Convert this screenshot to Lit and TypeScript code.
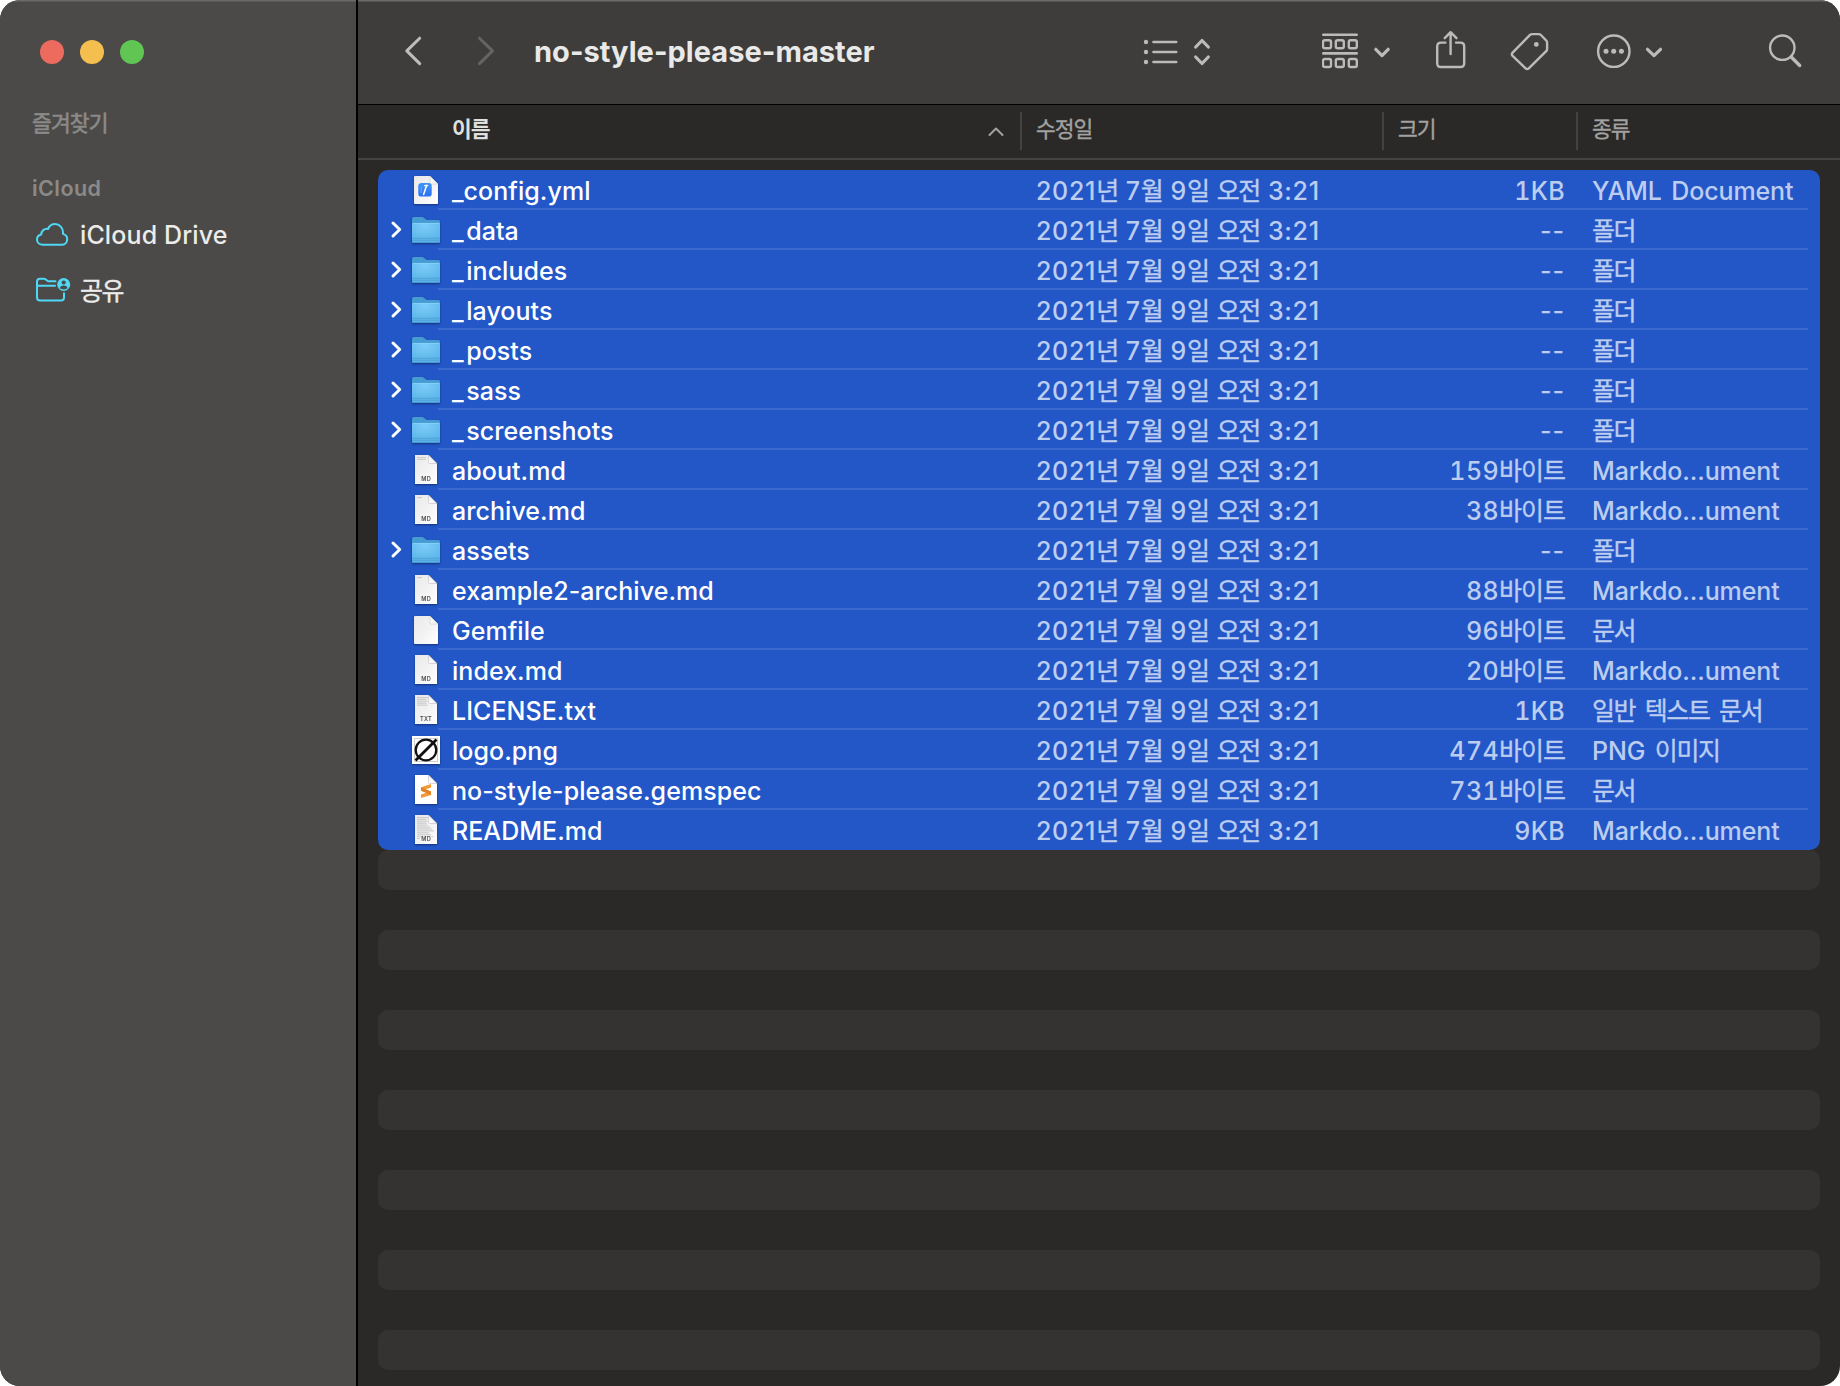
import { LitElement, html, svg, css, TemplateResult } from "lit";
import { customElement, property } from "lit/decorators.js";

type Kind = "config" | "folder" | "md" | "doc" | "txt" | "image" | "sublime";

interface Entry {
  name: string;
  icon: Kind;
  size: string;
  kind: string;
  preview?: number;
}

const MODIFIED = "2021년 7월 9일 오전 3:21";

const ENTRIES: Entry[] = [
  { name: "_config.yml", icon: "config", size: "1KB", kind: "YAML Document" },
  { name: "_data", icon: "folder", size: "--", kind: "폴더" },
  { name: "_includes", icon: "folder", size: "--", kind: "폴더" },
  { name: "_layouts", icon: "folder", size: "--", kind: "폴더" },
  { name: "_posts", icon: "folder", size: "--", kind: "폴더" },
  { name: "_sass", icon: "folder", size: "--", kind: "폴더" },
  { name: "_screenshots", icon: "folder", size: "--", kind: "폴더" },
  { name: "about.md", icon: "md", size: "159바이트", kind: "Markdo...ument", preview: 2 },
  { name: "archive.md", icon: "md", size: "38바이트", kind: "Markdo...ument", preview: 1 },
  { name: "assets", icon: "folder", size: "--", kind: "폴더" },
  { name: "example2-archive.md", icon: "md", size: "88바이트", kind: "Markdo...ument", preview: 1 },
  { name: "Gemfile", icon: "doc", size: "96바이트", kind: "문서" },
  { name: "index.md", icon: "md", size: "20바이트", kind: "Markdo...ument" },
  { name: "LICENSE.txt", icon: "txt", size: "1KB", kind: "일반 텍스트 문서", preview: 5 },
  { name: "logo.png", icon: "image", size: "474바이트", kind: "PNG 이미지" },
  { name: "no-style-please.gemspec", icon: "sublime", size: "731바이트", kind: "문서" },
  { name: "README.md", icon: "md", size: "9KB", kind: "Markdo...ument", preview: 12 },
];

/** Splits mixed text so that Hangul runs can carry their own tracking. */
function mixed(text: string): TemplateResult[] {
  return text
    .split(/([\uac00-\ud7a3]+)/)
    .filter(Boolean)
    .map((part) =>
      /[\uac00-\ud7a3]/.test(part)
        ? html`<span class="ko">${part}</span>`
        : html`<span>${part}</span>`
    );
}

@customElement("file-icon")
export class FileIcon extends LitElement {
  @property() kind: Kind = "doc";
  @property({ type: Number }) preview = 0;

  static styles = css`
    :host {
      display: block;
      width: 28px;
      height: 40px;
    }
    svg {
      display: block;
      filter: drop-shadow(0 1px 0.8px rgba(0, 0, 30, 0.45));
    }
    .ext {
      font: 600 5.6px Inter, "Liberation Sans", sans-serif;
      fill: #4a4a4a;
      letter-spacing: 0.25px;
    }
  `;

  private defs() {
    return svg`<defs>
      <linearGradient id="page" x1="0" y1="0" x2="1" y2="1">
        <stop offset="0" stop-color="#e9e9e9" /><stop offset="0.5" stop-color="#f2f2f2" /><stop offset="1" stop-color="#ffffff" />
      </linearGradient>
      <linearGradient id="fold" x1="0" y1="1" x2="1" y2="0">
        <stop offset="0" stop-color="#ffffff" /><stop offset="0.5" stop-color="#f4f4f4" /><stop offset="1" stop-color="#c4c4c4" />
      </linearGradient>
      <radialGradient id="front" cx="0.45" cy="0.1" r="0.95">
        <stop offset="0" stop-color="#7ccefa" /><stop offset="1" stop-color="#57b1e3" />
      </radialGradient>
      <linearGradient id="tool" x1="0" y1="0" x2="0" y2="1">
        <stop offset="0" stop-color="#3f93fb" /><stop offset="1" stop-color="#2a70f0" />
      </linearGradient>
    </defs>`;
  }

  private widePage() {
    return svg`
      <path d="M3 6h15l8 8v19a1 1 0 0 1-1 1H3a1 1 0 0 1-1-1V7a1 1 0 0 1 1-1z" fill="url(#page)" />
      <path d="M18 6l8 8h-7a1 1 0 0 1-1-1z" fill="url(#fold)" stroke="#bdbdbd" stroke-width="0.5" />`;
  }

  private narrowPage(fill = "url(#page)") {
    return svg`
      <path d="M3 5h13.5L25 13.5V34H3z" fill=${fill} />
      <path d="M16.5 5L25 13.5h-7.5a1 1 0 0 1-1-1z" fill="url(#fold)" stroke="#b5b5b5" stroke-width="0.5" />`;
  }

  private lines() {
    const n = this.preview;
    return Array.from({ length: n }, (_, i) => {
      const width = i < 5 ? 10.5 - ((i * 3) % 2) : 17 - ((i * 5) % 7);
      const short = n < 3 ? (n === 2 ? 9 : 5) : width;
      return svg`<rect x="5" y=${7 + i * 1.9} width=${short} height="1.1" fill="#cbcbcb" />`;
    });
  }

  private art() {
    switch (this.kind) {
      case "folder":
        return svg`
          <path d="M0 9a2 2 0 0 1 2-2h7.5c1.2 0 1.8.4 2.6 1.1l1.6 1.2c.5.4 1 .6 1.7.6H26.5a1.5 1.5 0 0 1 1.5 1.5V20H0z" fill="#459bd2" />
          <path d="M0 14.2a1.2 1.2 0 0 1 1.2-1.2H26.8a1.2 1.2 0 0 1 1.2 1.2V31.5a1.5 1.5 0 0 1-1.5 1.5H1.5A1.5 1.5 0 0 1 0 31.5z" fill="url(#front)" />
          <path d="M0.5 13.4H27.5" stroke="#8ad3f8" stroke-width="0.8" />
          <path d="M0 28.3H28M0 30.3H28" stroke="#4a9fd4" stroke-width="0.8" />
          <path d="M1 32.6H27" stroke="#3f94cc" stroke-width="0.8" />`;
      case "config":
        return svg`${this.widePage()}
          <rect x="6.3" y="13" width="13.4" height="13.6" rx="3.2" fill="url(#tool)" />
          <path d="M14.4 16L11.6 24.4" stroke="#fff" stroke-width="1.5" stroke-linecap="round" />
          <path d="M12 15.7l2.9-.5 1.3.9" fill="none" stroke="#fff" stroke-width="1.1" />
          <path d="M9.4 16.5L9 23" stroke="#6fb0fd" stroke-width="0.9" />`;
      case "doc":
        return this.widePage();
      case "md":
      case "txt":
        return svg`${this.narrowPage()}${this.lines()}
          ${this.preview > 6 ? svg`<rect x="8" y="26.5" width="12" height="5.5" fill="#f6f6f6" />` : null}
          <text class="ext" x="14.1" y="31" text-anchor="middle">${this.kind.toUpperCase()}</text>`;
      case "image":
        return svg`
          <rect x="0" y="6" width="28" height="28" fill="#fff" />
          <rect x="2.5" y="8.5" width="23" height="23" fill="#fff" stroke="#cfcfcf" />
          <circle cx="14" cy="20" r="10.3" fill="none" stroke="#111" stroke-width="2.3" />
          <path d="M3.5 30.5L24.5 9.5" stroke="#111" stroke-width="2.8" />`;
      case "sublime":
        return svg`${this.narrowPage("#ffffff")}
          <path d="M9 17.2L19 14v3.6l-6 1.9 6 1.9v3.6L9 28.1v-3.6l6-1.9-6-1.9z" fill="#f29a36" />
          <path d="M9 17.2v3.5l10 4.3v-3.6z" fill="#df8326" />`;
    }
  }

  render() {
    return html`<svg width="28" height="40" viewBox="0 0 28 40">${this.defs()}${this.art()}</svg>`;
  }
}

@customElement("app-root")
export class AppRoot extends LitElement {
  static styles = css`
    :host {
      display: block;
      width: 1840px;
      height: 1386px;
      background: #fff;
      font-family: Inter, "Noto Sans CJK KR", sans-serif;
      font-size: 25px;
      color: #fff;
    }
    .window {
      display: flex;
      box-sizing: border-box;
      height: 1386px;
      border-radius: 20px;
      overflow: hidden;
      background: #2a2927;
    }
    svg {
      display: block;
      flex: none;
      fill: none;
      stroke-linecap: round;
      stroke-linejoin: round;
    }
    .ko {
      letter-spacing: -1.55px;
      font-weight: 400;
      -webkit-text-stroke: 0.35px currentColor;
    }

    .sidebar {
      box-sizing: border-box;
      width: 358px;
      flex: none;
      background: linear-gradient(#6b6a68 0 1px, #5a5957 1px 2px, #4b4a48 2px);
      border-right: 2px solid #000;
    }
    .lights {
      display: flex;
      gap: 16px;
      padding: 40px 0 0 40px;
    }
    .light {
      width: 24px;
      height: 24px;
      border-radius: 50%;
    }
    .red { background: #ed6a5e; }
    .amber { background: #f5bf4f; }
    .green { background: #61c554; }
    .section {
      padding-left: 32px;
      font-size: 21.5px;
      font-weight: 600;
      line-height: 32px;
      color: #8b8a88;
    }
    .favorites {
      margin-top: 43px;
      font-weight: 500;
    }
    .favorites .ko {
      letter-spacing: -0.9px;
      -webkit-text-stroke-width: 0.6px;
    }
    .cloud-title {
      margin-top: 33px;
      letter-spacing: 0.45px;
    }
    .place {
      display: flex;
      align-items: center;
      gap: 9px;
      height: 40px;
      padding-left: 34px;
      color: #ececeb;
      font-weight: 500;
    }
    .place svg { stroke: #4fd8f5; stroke-width: 2; }
    .drive { margin-top: 11px; letter-spacing: 0.12px; }
    .shared { margin-top: 14px; }

    .main {
      display: flex;
      flex-direction: column;
      flex: 1;
      min-width: 0;
    }
    .toolbar {
      display: flex;
      align-items: center;
      height: 104px;
      flex: none;
      border-bottom: 1px solid #000;
      background: linear-gradient(#6b6a68 0 1px, #555452 1px 2px, #3e3d3b 2px);
    }
    .toolbar svg { stroke: #bcbbba; stroke-width: 2.4; }
    .toolbar svg.back { margin-left: 44px; stroke: #bebdbc; stroke-width: 3; }
    .toolbar svg.forward { margin-left: 48px; stroke: #656462; stroke-width: 3; }
    .title {
      width: 609px;
      margin: 0 0 1px 36px;
      font-size: 29px;
      font-weight: 700;
      line-height: 48px;
      letter-spacing: 0.04px;
      color: #e9e9e8;
    }
    .group { margin-left: 104px; }
    .share { margin-left: 40px; }
    .tag { margin-left: 40px; }
    .more { margin-left: 44px; }
    .search { margin-left: 112px; }

    .columns {
      display: grid;
      grid-template-columns: 662px 362px 194px 1fr;
      box-sizing: border-box;
      height: 55px;
      flex: none;
      padding-top: 7px;
      border-bottom: 2px solid #454442;
      font-size: 21.5px;
      line-height: 35px;
      color: #a3a2a1;
    }
    .columns .ko { letter-spacing: -1px; }
    .column {
      height: 38px;
      padding-left: 14px;
      border-left: 2px solid #434240;
    }
    .column.first {
      display: flex;
      justify-content: space-between;
      padding: 0 16px 0 94px;
      border-left: 0;
      color: #dfdfde;
    }
    .column.first .ko { font-weight: 700; -webkit-text-stroke-width: 0; }
    .caret { stroke: #a3a2a1; stroke-width: 2; }

    .list {
      padding: 10px 20px 0;
    }
    .selection {
      border-radius: 10px;
      background: #2357c8;
      overflow: hidden;
    }
    .row {
      display: grid;
      grid-template-columns: 34px 40px 584px 409px 120px 1fr;
      height: 40px;
      line-height: 42px;
      white-space: nowrap;
      background: linear-gradient(#3c6acf, #3c6acf) no-repeat 60px 38px / 1370px 2px;
      color: #bccdf0;
      font-weight: 450;
    }
    .row:last-child { background: none; }
    .disclosure { stroke: #fff; stroke-width: 3; }
    .name {
      color: #fff;
      font-weight: 500;
      letter-spacing: 0.05px;
    }
    .lead { letter-spacing: 2.6px; }
    .date {
      letter-spacing: 0.7px;
      word-spacing: 0.9px;
    }
    .size {
      text-align: right;
      font-variant-numeric: tabular-nums;
      letter-spacing: 0.35px;
    }
    .size .ko { letter-spacing: -1px; }
    .size.none {
      font-variant-numeric: normal;
      letter-spacing: 1px;
    }
    .kind {
      padding-left: 27px;
      letter-spacing: -0.12px;
      word-spacing: 3px;
    }
    .kind .ko { letter-spacing: -1.4px; }
    .stripe {
      height: 40px;
      margin-bottom: 40px;
      border-radius: 10px;
      background: #343331;
    }
  `;

  private row(e: Entry) {
    const folder = e.icon === "folder";
    return html`<div class="row">
      ${folder
        ? html`<svg class="disclosure" width="34" height="40" viewBox="0 0 34 40"><path d="M15 13l6.700 6.500L15 26" /></svg>`
        : html`<span></span>`}
      <file-icon .kind=${e.icon} .preview=${e.preview ?? 0}></file-icon>
      <span class="name">${folder && e.name.startsWith("_")
        ? html`<span class="lead">_</span>${e.name.slice(1)}`
        : e.name}</span>
      <span class="date">${mixed(MODIFIED)}</span>
      <span class=${folder ? "size none" : "size"}>${mixed(e.size)}</span>
      <span class="kind">${mixed(e.kind)}</span>
    </div>`;
  }

  private sidebar() {
    return html`<aside class="sidebar">
      <div class="lights">
        <span class="light red"></span><span class="light amber"></span><span class="light green"></span>
      </div>
      <div class="section favorites">${mixed("즐겨찾기")}</div>
      <div class="section cloud-title">iCloud</div>
      <div class="place drive">
        <svg width="37" height="40" viewBox="0 0 37 40">
          <path d="M9 29.800C5.500 29.800 3 27.500 3 24.500c0-2.700 1.800-4.600 4.300-5.100C7.300 16 10.500 13.200 14 14 15.300 11 17.800 9.100 21 9.100c4.800 0 8 3.700 8 8.600v1.200c2.800.8 4.200 2.900 4.200 5.400 0 3.100-2.500 5.500-5.700 5.500z" />
        </svg>
        <span>iCloud Drive</span>
      </div>
      <div class="place shared">
        <svg width="37" height="40" viewBox="0 0 37 40">
          <path d="M21.500 12.200H14L11.500 10.300C10.900 9.900 10.500 9.700 9.800 9.700H6C4 9.700 3 10.700 3 12.700V28.500C3 30.500 4 31.500 6 31.500H27C29 31.500 30 30.500 30 28.500V24.300M3 16.800H21" />
          <circle cx="29.700" cy="15.500" r="6.500" fill="#4fd8f5" stroke="none" />
          <circle cx="29.700" cy="13.500" r="2.100" fill="#4b4a48" stroke="none" />
          <path d="M25.800 19.300c.6-2 2-2.700 3.900-2.700s3.300.7 3.900 2.700c-2.100 1.500-5.700 1.500-7.800 0z" fill="#4b4a48" stroke="none" />
        </svg>
        <span>${mixed("공유")}</span>
      </div>
    </aside>`;
  }

  private toolbar() {
    const cell = (x: number, y: number) => svg`<rect x=${x} y=${y} width="8" height="8" rx="1.800" />`;
    return html`<header class="toolbar">
      <svg class="back" width="24" height="48" viewBox="402 28 24 48"><path d="M419.700 38.200L406.800 50.900l12.900 12.700" /></svg>
      <svg class="forward" width="24" height="48" viewBox="474 28 24 48"><path d="M479.500 38.200L492.500 50.900l-13 12.700" /></svg>
      <h1 class="title">no-style-please-master</h1>
      <svg class="view" width="75" height="48" viewBox="1143 28 75 48">
        <g fill="#bcbbba" stroke="none"><circle cx="1146" cy="42" r="2.200" /><circle cx="1146" cy="52" r="2.200" /><circle cx="1146" cy="62" r="2.200" /></g>
        <path d="M1153.500 42h22.700M1153.500 52h22.700M1153.500 62h22.700" stroke-width="2.600" />
        <path d="M1195.700 47l6.300-6.500 6.300 6.500M1195.700 57l6.300 6.500 6.300-6.500" stroke-width="3.200" />
      </svg>
      <svg class="group" width="74" height="48" viewBox="1322 28 74 48">
        <path d="M1323.300 34.700h33.400M1323.300 53.400h33.400" stroke-width="2.600" />
        ${[1323, 1335.8, 1348.8].map((x) => svg`${cell(x, 40.2)}${cell(x, 59)}`)}
        <path d="M1375.800 49.300l6.200 6.300 6.200-6.300" stroke-width="3.200" />
      </svg>
      <svg class="share" width="31" height="48" viewBox="1436 28 31 48">
        <path d="M1445.400 42.600h-4.400q-3.800 0-3.800 3.800v16.800q0 3.800 3.800 3.800h19.400q3.800 0 3.800-3.800v-16.800q0-3.800-3.800-3.800h-4.400" />
        <path d="M1450.600 54V32.500M1444.700 38.200l5.900-6 5.900 6" />
      </svg>
      <svg class="tag" width="42" height="48" viewBox="1507 28 42 48">
        <path d="M1530 34.900q.9-.8 2.200-.8h6.500q1.300 0 2.200.9l5.200 5.300q1 .9 1 2.200v6.500q0 1.300-.9 2.200l-17.400 17.100q-1.600 1.500-3.200 0l-13-12.400q-1.500-1.600 0-3.300z" />
        <circle cx="1536.300" cy="44.400" r="2.400" fill="#bcbbba" stroke="none" />
      </svg>
      <svg class="more" width="72" height="48" viewBox="1593 28 72 48">
        <circle cx="1613.800" cy="51.200" r="15.700" />
        <g fill="#bcbbba" stroke="none"><circle cx="1606" cy="51.300" r="2.500" /><circle cx="1613.700" cy="51.300" r="2.500" /><circle cx="1621.400" cy="51.300" r="2.500" /></g>
        <path d="M1647.500 49.300l6.500 6.300 6.500-6.300" stroke-width="3.200" />
      </svg>
      <svg class="search" width="32" height="48" viewBox="1777 28 32 48" overflow="visible">
        <circle cx="1782.300" cy="47.700" r="12.200" /><path d="M1791.500 57.300l8.200 8.200" stroke-width="3.400" />
      </svg>
    </header>`;
  }

  render() {
    return html`<div class="window">
      ${this.sidebar()}
      <main class="main">
        ${this.toolbar()}
        <div class="columns">
          <div class="column first">
            <span>${mixed("이름")}</span>
            <svg class="caret" width="16" height="38" viewBox="0 0 16 38"><path d="M1.500 23L8 16.500l6.500 6.500" /></svg>
          </div>
          <div class="column">${mixed("수정일")}</div>
          <div class="column">${mixed("크기")}</div>
          <div class="column">${mixed("종류")}</div>
        </div>
        <section class="list">
          <div class="selection">${ENTRIES.map((e) => this.row(e))}</div>
          ${Array.from({ length: 7 }, () => html`<div class="stripe"></div>`)}
        </section>
      </main>
    </div>`;
  }
}
